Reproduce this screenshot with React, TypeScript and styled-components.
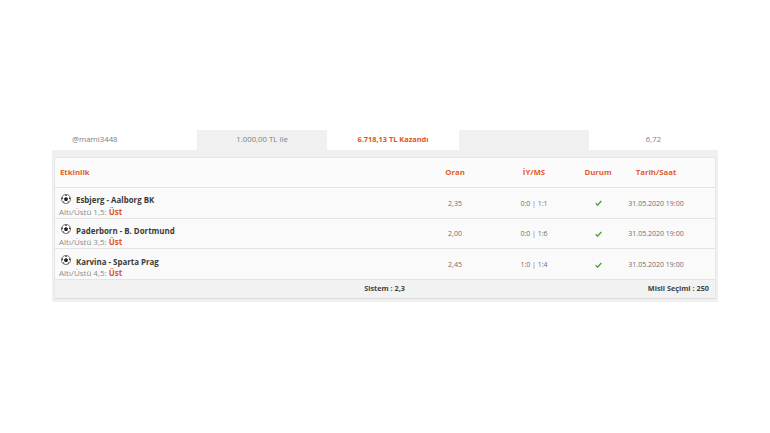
import styled, { createGlobalStyle } from "styled-components";

const GlobalStyle = createGlobalStyle`
  html, body {
    margin: 0;
    padding: 0;
    background: #fff;
    font-family: "Open Sans", "Liberation Sans", sans-serif;
  }
`;

const Page = styled.div`
  width: 770px;
  height: 433px;
  padding: 130px 52px 0;
  box-sizing: border-box;
`;

const Summary = styled.div`
  display: grid;
  grid-template-columns: 145px 130px 132px 130px 129px;
  height: 20px;
`;

const SummaryCell = styled.div<{ $shade?: boolean; $win?: boolean; $first?: boolean }>`
  display: flex;
  align-items: center;
  justify-content: ${({ $first }) => ($first ? "flex-start" : "center")};
  padding-left: ${({ $first }) => ($first ? "20px" : "0")};
  padding-bottom: 2px;
  box-sizing: border-box;
  background: ${({ $shade }) => ($shade ? "#f0f0f0" : "#fff")};
  color: ${({ $win }) => ($win ? "#e2542a" : "#808080")};
  font-size: ${({ $win }) => ($win ? "7.4px" : "7.8px")};
  font-weight: ${({ $win }) => ($win ? 700 : 400)};
`;

const Panel = styled.div`
  background: #f0f0f0;
  padding: 7px 2px 3px;
`;

const Table = styled.div`
  background: #fafafa;
  border: 1px solid #e6e6e6;
  border-bottom: 1px solid #dcdcdc;
`;

const Grid = styled.div`
  display: grid;
  grid-template-columns: 360px 80px 78px 50px 66px 1fr;
  align-items: center;
`;

const HeadRow = styled(Grid)`
  height: 29px;
  border-bottom: 1px solid #e4e4e4;
  background: #fbfbfb;
`;

const HeadCell = styled.div<{ $left?: boolean }>`
  color: #e2602f;
  font-size: 7.8px;
  font-weight: 700;
  text-align: ${({ $left }) => ($left ? "left" : "center")};
  padding-left: ${({ $left }) => ($left ? "5px" : "0")};
  padding-bottom: 1px;
`;

const MatchRow = styled(Grid)`
  height: 29.67px;
  border-bottom: 1px solid #e4e4e4;
`;

const EventCell = styled.div`
  padding-left: 4px;
  padding-top: 6px;
`;

const Teams = styled.div`
  display: flex;
  align-items: center;
  gap: 5px;
  height: 10.5px;
  padding-left: 2px;
  color: #3a3a3a;
  font-size: 7.9px;
  font-weight: 700;
`;

const Ball = styled.svg`
  width: 10px;
  height: 10px;
  margin-top: -3px;
  flex: none;
`;

const Market = styled.div`
  color: #8c8c8c;
  font-size: 8px;
  line-height: 11px;
`;

const Pick = styled.span`
  color: #e2542a;
  font-weight: 700;
`;

const ValueCell = styled.div`
  color: #6e6e6e;
  font-size: 7px;
  text-align: center;
  padding-top: 1px;
`;

const Check = styled.svg`
  display: block;
  width: 7px;
  height: 6px;
  margin: 0 auto;
`;

const Footer = styled.div`
  display: grid;
  grid-template-columns: 1fr 1fr;
  align-items: center;
  height: 18px;
  padding-bottom: 2px;
  box-sizing: border-box;
  background: #f2f2f2;
  color: #444;
  font-size: 7.3px;
  font-weight: 700;
`;

const FooterCenter = styled.div`
  text-align: right;
  margin-right: -20px;
`;

const FooterRight = styled.div`
  text-align: right;
  padding-right: 6px;
`;

const BallIcon = () => (
  <Ball viewBox="0 0 24 24">
    <circle cx="12" cy="12" r="11" fill="#fff" stroke="#333" strokeWidth="1.5" />
    <polygon points="12,7 17,11 15,16.5 9,16.5 7,11" fill="#222" />
    <path d="M12 1 L9 4 L15 4 Z M1 11 L4 7 L5 13 Z M23 11 L20 7 L19 13 Z M6 21 L9 20 L5 17 Z M18 21 L15 20 L19 17 Z" fill="#222" />
  </Ball>
);

const CheckIcon = () => (
  <Check viewBox="0 0 16 14">
    <path d="M1.5 7.5 L6 12 L14.5 2.5" fill="none" stroke="#4f9e35" strokeWidth="3.2" />
  </Check>
);

const matches = [
  { teams: "Esbjerg - Aalborg BK", line: "Altı/Üstü 1,5:", odd: "2,35", score: "0:0 | 1:1" },
  { teams: "Paderborn - B. Dortmund", line: "Altı/Üstü 3,5:", odd: "2,00", score: "0:0 | 1:6" },
  { teams: "Karvina - Sparta Prag", line: "Altı/Üstü 4,5:", odd: "2,45", score: "1:0 | 1:4" },
];

export default function App() {
  return (
    <Page>
      <GlobalStyle />
      <Summary>
        <SummaryCell $first>@mami3448</SummaryCell>
        <SummaryCell $shade>1.000,00 TL ile</SummaryCell>
        <SummaryCell $win>6.718,13 TL Kazandı</SummaryCell>
        <SummaryCell $shade />
        <SummaryCell>6,72</SummaryCell>
      </Summary>
      <Panel>
        <Table>
          <HeadRow>
            <HeadCell $left>Etkinlik</HeadCell>
            <HeadCell>Oran</HeadCell>
            <HeadCell>İY/MS</HeadCell>
            <HeadCell>Durum</HeadCell>
            <HeadCell>Tarih/Saat</HeadCell>
          </HeadRow>
          {matches.map((m) => (
            <MatchRow key={m.teams}>
              <EventCell>
                <Teams>
                  <BallIcon />
                  {m.teams}
                </Teams>
                <Market>
                  {m.line} <Pick>Üst</Pick>
                </Market>
              </EventCell>
              <ValueCell>{m.odd}</ValueCell>
              <ValueCell>{m.score}</ValueCell>
              <ValueCell>
                <CheckIcon />
              </ValueCell>
              <ValueCell>31.05.2020 19:00</ValueCell>
            </MatchRow>
          ))}
          <Footer>
            <FooterCenter>Sistem : 2,3</FooterCenter>
            <FooterRight>Misli Seçimi : 250</FooterRight>
          </Footer>
        </Table>
      </Panel>
    </Page>
  );
}
